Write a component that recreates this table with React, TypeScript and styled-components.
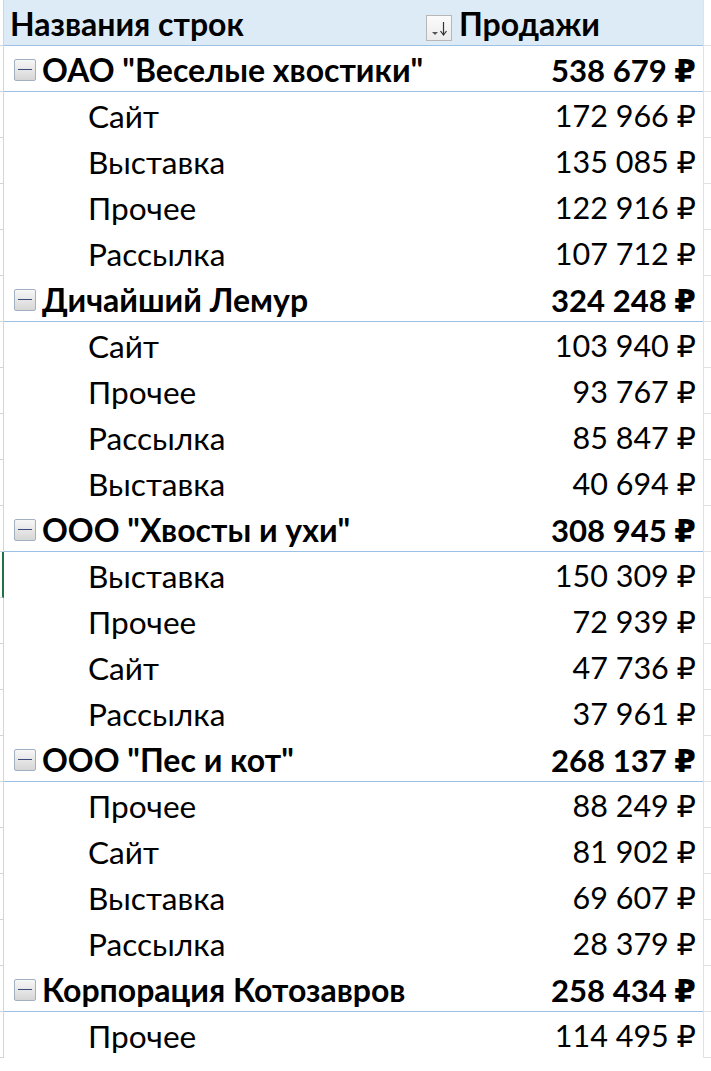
import * as React from "react";
import styled, { createGlobalStyle } from "styled-components";

const GlobalStyle = createGlobalStyle`
  html, body {
    margin: 0;
    padding: 0;
    background: #ffffff;
    overflow: hidden;
  }
  body {
    font-family: Lato, "Open Sans", "DejaVu Sans", sans-serif;
    color: #000000;
  }
`;

interface Group {
  readonly name: string;
  readonly total: string;
  readonly items: ReadonlyArray<[string, string]>;
}

const groups: Group[] = [
  {
    name: 'ОАО "Веселые хвостики"',
    total: "538 679 ₽",
    items: [
      ["Сайт", "172 966 ₽"],
      ["Выставка", "135 085 ₽"],
      ["Прочее", "122 916 ₽"],
      ["Рассылка", "107 712 ₽"],
    ],
  },
  {
    name: "Дичайший Лемур",
    total: "324 248 ₽",
    items: [
      ["Сайт", "103 940 ₽"],
      ["Прочее", "93 767 ₽"],
      ["Рассылка", "85 847 ₽"],
      ["Выставка", "40 694 ₽"],
    ],
  },
  {
    name: 'ООО "Хвосты и ухи"',
    total: "308 945 ₽",
    items: [
      ["Выставка", "150 309 ₽"],
      ["Прочее", "72 939 ₽"],
      ["Сайт", "47 736 ₽"],
      ["Рассылка", "37 961 ₽"],
    ],
  },
  {
    name: 'ООО "Пес и кот"',
    total: "268 137 ₽",
    items: [
      ["Прочее", "88 249 ₽"],
      ["Сайт", "81 902 ₽"],
      ["Выставка", "69 607 ₽"],
      ["Рассылка", "28 379 ₽"],
    ],
  },
  {
    name: "Корпорация Котозавров",
    total: "258 434 ₽",
    items: [["Прочее", "114 495 ₽"]],
  },
];

type RowKind = "header" | "group" | "item";

// the selected cell of the column on the left (green border)
const SELECTED_ROW = 12;

const Sheet = styled.div`
  display: flex;
  flex-direction: column;
  width: 711px;
  height: 1071px;
  overflow: hidden;
`;

const Row = styled.div<{ kind: RowKind }>`
  display: flex;
  height: 46px;
  flex: none;
  box-sizing: border-box;
  font-size: ${({ kind }) => (kind === "item" ? "31.6px" : "32px")};
  font-weight: ${({ kind }) => (kind === "item" ? 400 : 700)};
  white-space: nowrap;
`;

const Gutter = styled.div<{ selected?: boolean }>`
  width: 4px;
  flex: none;
  box-sizing: border-box;
  border-bottom: 1px solid #d4d4d4;
  border-right: ${({ selected }) => (selected ? "2px solid #217346" : "1px solid #d4d4d4")};
`;

const Cells = styled.div<{ kind: RowKind }>`
  display: flex;
  align-items: center;
  width: 699px;
  flex: none;
  box-sizing: border-box;
  background: ${({ kind }) => (kind === "header" ? "#ddebf7" : "#ffffff")};
  border-bottom: 1px solid ${({ kind }) => (kind === "item" ? "#ffffff" : "#9bc2e6")};
`;

const LabelCell = styled.div<{ kind: RowKind }>`
  display: flex;
  align-items: center;
  flex: 1;
  padding-left: ${({ kind }) => (kind === "header" ? "6px" : kind === "group" ? "10px" : "84px")};
  padding-top: 2px;
`;

const ValueCell = styled.div<{ kind: RowKind }>`
  display: flex;
  align-items: center;
  justify-content: ${({ kind }) => (kind === "header" ? "flex-start" : "flex-end")};
  width: ${({ kind }) => (kind === "header" ? "277px" : "300px")};
  font-size: ${({ kind }) => (kind === "item" ? "30.5px" : kind === "group" ? "31.1px" : "32px")};
  padding-right: 7px;
  padding-top: 2px;
  box-sizing: border-box;
`;

const RightEdge = styled.div`
  flex: 1;
  border-left: 1px solid #e1e1e1;
  border-bottom: 1px solid #e1e1e1;
`;

const ToggleBox = styled.span`
  display: inline-flex;
  align-items: center;
  justify-content: center;
  width: 22px;
  height: 22px;
  box-sizing: border-box;
  margin-right: 6px;
  border: 1px solid #a3b0c4;
  border-radius: 2px;
  background: linear-gradient(#f7f7f7, #d6d6d6);

  &::after {
    content: "";
    width: 14px;
    height: 1.5px;
    background: #3a4c7c;
  }
`;

const SortButton = styled.span`
  display: inline-flex;
  align-items: center;
  justify-content: center;
  width: 26px;
  height: 26px;
  box-sizing: border-box;
  margin: 0 7px 2px 0;
  border: 1px solid #b7b7b7;
  background: linear-gradient(#fbfbfb, #ececec);
  align-self: flex-end;
`;

const SortIcon = () => (
  <svg width="20" height="18" viewBox="0 0 20 18">
    <path d="M3 13 L9 13 L6 16 Z" fill="#555" />
    <path d="M14.5 3 L14.5 15" stroke="#333" strokeWidth="1.2" />
    <path d="M11.5 12 L14.5 16 L17.5 12" stroke="#333" strokeWidth="1.2" fill="none" />
  </svg>
);

export default function App() {
  let index = 0;
  const rows: React.ReactElement[] = [];

  rows.push(
    <Row kind="header" key="header">
      <Gutter selected={index === SELECTED_ROW} />
      <Cells kind="header">
        <LabelCell kind="header">Названия строк</LabelCell>
        <ValueCell kind="header">
          <SortButton>
            <SortIcon />
          </SortButton>
          Продажи
        </ValueCell>
      </Cells>
      <RightEdge />
    </Row>
  );
  index++;

  groups.forEach((group) => {
    rows.push(
      <Row kind="group" key={group.name}>
        <Gutter selected={index === SELECTED_ROW} />
        <Cells kind="group">
          <LabelCell kind="group">
            <ToggleBox />
            {group.name}
          </LabelCell>
          <ValueCell kind="group">{group.total}</ValueCell>
        </Cells>
        <RightEdge />
      </Row>
    );
    index++;
    group.items.forEach(([label, value]) => {
      rows.push(
        <Row kind="item" key={group.name + label}>
          <Gutter selected={index === SELECTED_ROW} />
          <Cells kind="item">
            <LabelCell kind="item">{label}</LabelCell>
            <ValueCell kind="item">{value}</ValueCell>
          </Cells>
          <RightEdge />
        </Row>
      );
      index++;
    });
  });

  return (
    <>
      <GlobalStyle />
      <Sheet>{rows}</Sheet>
    </>
  );
}
